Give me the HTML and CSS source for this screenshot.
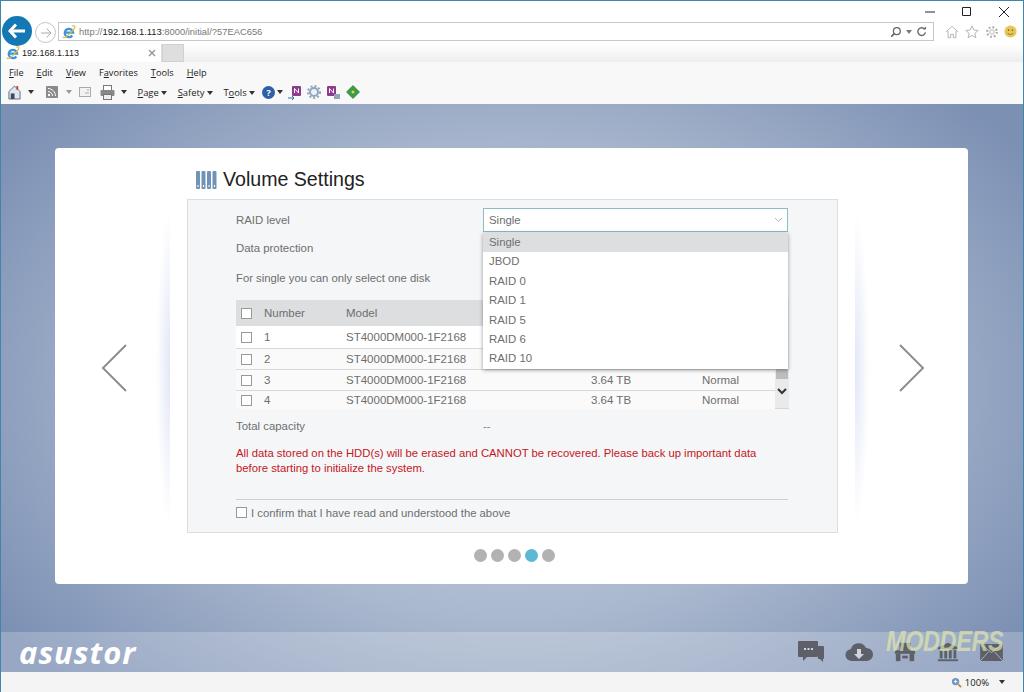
FILE: index.html
```html
<!DOCTYPE html>
<html lang="en">
<head>
    <meta charset="UTF-8">
    <title>Volume Settings</title>
    <link rel="stylesheet" href="styles.css">
</head>
<body>

<div class="window">
    <div class="titlebar">
        <svg class="win-btn" width="12" height="12" viewBox="0 0 12 12"><path d="M1 6h10" stroke="#222" fill="none"/></svg>
        <svg class="win-btn" width="12" height="12" viewBox="0 0 12 12"><path d="M1.5 1.5h8v8h-8z" stroke="#222" fill="none"/></svg>
        <svg class="win-btn last" width="12" height="12" viewBox="0 0 12 12"><path d="M1 1l10 10M11 1L1 11" stroke="#222" fill="none"/></svg>
    </div>

    <div class="navbar">
        <div class="back-btn">
            <svg width="18" height="16" viewBox="0 0 18 16"><path d="M8 1.500L2 8l6 6.500M2 8h15" stroke="#fff" stroke-width="3" fill="none"/></svg>
        </div>
        <div class="forward-btn">
            <svg width="12" height="12" viewBox="0 0 12 12"><path d="M6.500 1.500L11 6l-4.500 4.500M11 6H1" stroke="#aaa" fill="none"/></svg>
        </div>
        <div class="address">
            <svg class="ie-icon" width="14" height="14" viewBox="0 0 16 16"><use href="#ie"/></svg>
            <span class="url"><span class="dim">http://</span>192.168.1.113<span class="dim">:8000/initial/?57EAC656</span></span>
            <svg class="addr-tool" width="12" height="12" viewBox="0 0 14 14"><circle cx="8" cy="6" r="4" stroke="#666" stroke-width="1.500" fill="none"/><path d="M5 9l-3.500 3.500" stroke="#666" stroke-width="2"/></svg>
            <span class="caret small"></span>
            <svg class="addr-tool" width="11" height="11" viewBox="0 0 12 12"><path d="M9.500 3.500A4.200 4.200 0 1 0 10.300 7" stroke="#666" stroke-width="1.500" fill="none"/><path d="M7.500 3.500h3.500v-3z" fill="#666"/></svg>
        </div>
        <div class="nav-icons">
            <svg width="14" height="14" viewBox="0 0 16 16"><path d="M1 8l7-6.500L15 8M3.500 7v7.500h3v-4h3v4h3V7" stroke="#aaa" fill="none"/></svg>
            <svg width="14" height="14" viewBox="0 0 16 16"><path d="M8 1l2.100 4.700 5 .5-3.800 3.300 1.100 5L8 11.900l-4.400 2.600 1.100-5L.9 6.200l5-.5z" stroke="#aaa" fill="none"/></svg>
            <svg width="14" height="14" viewBox="0 0 16 16"><circle cx="8" cy="8" r="2.500" stroke="#aaa" fill="none"/><circle cx="8" cy="8" r="5.500" stroke="#aaa" stroke-width="2.500" stroke-dasharray="2 2.300" fill="none"/></svg>
            <svg class="smile" width="13" height="13" viewBox="0 0 15 15"><circle cx="7.500" cy="7.500" r="7" fill="#e9c65a"/><circle cx="5.300" cy="5.800" r="1" fill="#8a6d1c"/><circle cx="9.700" cy="5.800" r="1" fill="#8a6d1c"/><path d="M4 9c1.500 2.500 5.500 2.500 7 0" stroke="#8a6d1c" fill="none"/></svg>
        </div>
    </div>

    <div class="tabstrip">
        <div class="tab">
            <svg width="14" height="14" viewBox="0 0 16 16"><use href="#ie"/></svg>
            <span class="tab-title">192.168.1.113</span>
            <svg class="tab-close" width="8" height="8" viewBox="0 0 8 8"><path d="M1 1l6 6M7 1L1 7" stroke="#999" stroke-width="1.500"/></svg>
        </div>
        <div class="new-tab"></div>
    </div>

    <div class="menubar">
        <span><u>F</u>ile</span>
        <span><u>E</u>dit</span>
        <span><u>V</u>iew</span>
        <span>F<u>a</u>vorites</span>
        <span><u>T</u>ools</span>
        <span><u>H</u>elp</span>
    </div>

    <div class="commandbar">
        <svg class="cmd-home" width="13" height="15" viewBox="0 0 14 16"><path d="M7 1L1 7v8h12V7z" fill="#dfe6ee" stroke="#5a6a80"/><rect x="3" y="9" width="4" height="6" fill="#3a4a60"/><rect x="9" y="1" width="2" height="4" fill="#b04a4a"/></svg>
        <span class="caret"></span>
        <svg class="cmd-feed" width="12" height="12" viewBox="0 0 12 12"><rect width="12" height="12" rx="1" fill="#8a8a8a"/><circle cx="3" cy="9" r="1.200" fill="#fff"/><path d="M2 5.500c2.500 0 4.500 2 4.500 4.500M2 2.500c4 0 7.500 3.500 7.500 7.500" stroke="#fff" fill="none"/></svg>
        <span class="caret light"></span>
        <svg class="cmd-mail" width="12" height="10" viewBox="0 0 12 10"><rect x=".5" y=".5" width="11" height="9" fill="#f2f2f2" stroke="#aaa"/><path d="M6 6h4M8 3h2" stroke="#aaa"/></svg>
        <svg class="cmd-print" width="15" height="15" viewBox="0 0 15 15"><rect x="3.500" y=".5" width="8" height="5" fill="#fff" stroke="#777"/><rect x=".5" y="5" width="14" height="6" rx="1" fill="#888"/><rect x="3.500" y="9.500" width="8" height="5" fill="#eee" stroke="#777"/></svg>
        <span class="caret"></span>
        <span class="cmd-item"><u>P</u>age <span class="caret"></span></span>
        <span class="cmd-item"><u>S</u>afety <span class="caret"></span></span>
        <span class="cmd-item">T<u>o</u>ols <span class="caret"></span></span>
        <span class="cmd-help">?</span>
        <span class="caret"></span>
        <svg class="cmd-ext first" width="15" height="15" viewBox="0 0 15 15"><rect x="5" y="1" width="9" height="10" rx="1" fill="#8e3a8e"/><path d="M7.500 8V3.500l4 4.500V3.500" stroke="#fff" fill="none"/><path d="M1 13h6M5 11l2 2-2 2" stroke="#3a6ab0" fill="none"/></svg>
        <svg class="cmd-ext" width="14" height="14" viewBox="0 0 14 14"><circle cx="7" cy="7" r="4" stroke="#8fa5bd" stroke-width="2" fill="#eef2f6"/><circle cx="7" cy="7" r="6" stroke="#8fa5bd" stroke-width="2" stroke-dasharray="2 2" fill="none"/></svg>
        <svg class="cmd-ext" width="15" height="15" viewBox="0 0 15 15"><rect x="1" y="1" width="9" height="10" rx="1" fill="#8e3a8e"/><path d="M3.500 8V3.500l4 4.500V3.500" stroke="#fff" fill="none"/><rect x="8" y="9" width="6" height="5" fill="#8fa5bd"/></svg>
        <svg class="cmd-ext" width="14" height="14" viewBox="0 0 14 14"><path d="M7 0l7 7-7 7-7-7z" fill="#3f9b4c"/><circle cx="7" cy="7" r="1.500" fill="#e8d24a"/></svg>
    </div>

    <div class="stage">
        <div class="stage-main">
            <svg class="arrow arrow-left" width="28" height="50" viewBox="0 0 28 50"><path d="M26 2L3 25l23 23" stroke="#8b8f95" stroke-width="2" fill="none"/></svg>
            <div class="card">
                <div class="card-head">
                    <svg width="22" height="18" viewBox="0 0 22 18"><g fill="#7094b8"><rect x="0" y="0" width="4" height="18" rx="1"/><rect x="5.500" y="0" width="4" height="18" rx="1"/><rect x="11" y="0" width="4" height="18" rx="1"/><rect x="16.500" y="0" width="4" height="18" rx="1"/></g><g fill="#fff"><rect x="1.500" y="14" width="1" height="2"/><rect x="7" y="14" width="1" height="2"/><rect x="12.500" y="14" width="1" height="2"/><rect x="18" y="14" width="1" height="2"/></g></svg>
                    <h1>Volume Settings</h1>
                </div>

                <div class="panel">
                    <div class="row row-raid">
                        <label>RAID level</label>
                        <div class="select">
                            <span>Single</span>
                            <svg width="9" height="6" viewBox="0 0 9 6"><path d="M1 1l3.500 3.500L8 1" stroke="#b5b5b5" fill="none"/></svg>
                            <ul class="dropdown">
                                <li class="current">Single</li>
                                <li>JBOD</li>
                                <li>RAID 0</li>
                                <li>RAID 1</li>
                                <li>RAID 5</li>
                                <li>RAID 6</li>
                                <li>RAID 10</li>
                            </ul>
                        </div>
                    </div>
                    <div class="row row-protect"><label>Data protection</label></div>
                    <div class="row row-hint"><label>For single you can only select one disk</label></div>

                    <div class="disks">
                        <div class="disk-table">
                            <div class="disk-row disk-head">
                                <span class="col-check"><i class="check"></i></span>
                                <span class="col-num">Number</span>
                                <span class="col-model">Model</span>
                                <span class="col-size"></span>
                                <span class="col-status"></span>
                            </div>
                            <div class="disk-row">
                                <span class="col-check"><i class="check"></i></span>
                                <span class="col-num">1</span>
                                <span class="col-model">ST4000DM000-1F2168</span>
                                <span class="col-size">3.64 TB</span>
                                <span class="col-status">Normal</span>
                            </div>
                            <div class="disk-row">
                                <span class="col-check"><i class="check"></i></span>
                                <span class="col-num">2</span>
                                <span class="col-model">ST4000DM000-1F2168</span>
                                <span class="col-size">3.64 TB</span>
                                <span class="col-status">Normal</span>
                            </div>
                            <div class="disk-row">
                                <span class="col-check"><i class="check"></i></span>
                                <span class="col-num">3</span>
                                <span class="col-model">ST4000DM000-1F2168</span>
                                <span class="col-size">3.64 TB</span>
                                <span class="col-status">Normal</span>
                            </div>
                            <div class="disk-row">
                                <span class="col-check"><i class="check"></i></span>
                                <span class="col-num">4</span>
                                <span class="col-model">ST4000DM000-1F2168</span>
                                <span class="col-size">3.64 TB</span>
                                <span class="col-status">Normal</span>
                            </div>
                        </div>
                        <div class="scrollbar">
                            <div class="scroll-thumb"></div>
                            <svg width="10" height="7" viewBox="0 0 10 7"><path d="M1 1l4 4 4-4" stroke="#333" stroke-width="2" fill="none"/></svg>
                        </div>
                    </div>

                    <div class="row row-total"><label>Total capacity</label><span class="total-value">--</span></div>

                    <p class="warning">All data stored on the HDD(s) will be erased and CANNOT be recovered. Please back up important data before starting to initialize the system.</p>

                    <div class="confirm">
                        <i class="check"></i>
                        <span>I confirm that I have read and understood the above</span>
                    </div>
                </div>

                <div class="dots">
                    <i></i><i></i><i></i><i class="active"></i><i></i>
                </div>
            </div>
            <svg class="arrow arrow-right" width="28" height="50" viewBox="0 0 28 50"><path d="M2 2l23 23L2 48" stroke="#8b8f95" stroke-width="2" fill="none"/></svg>
        </div>

        <div class="footer">
            <span class="logo">asustor</span>
            <div class="footer-icons">
                <svg width="26" height="22" viewBox="0 0 26 22"><path d="M22 5h3a1 1 0 0 1 1 1v11a1 1 0 0 1-1 1v3l-3-3h-2V5z" fill="#5d6068"/><path d="M1 0h18a1 1 0 0 1 1 1v14a1 1 0 0 1-1 1H9l-4 4v-4H1a1 1 0 0 1-1-1V1a1 1 0 0 1 1-1z" fill="#5d6068"/><g fill="#cfd5df"><rect x="6" y="7" width="2" height="2"/><rect x="9.500" y="7" width="2" height="2"/><rect x="13" y="7" width="2" height="2"/></g></svg>
                <svg width="28" height="20" viewBox="0 0 28 20"><path d="M7 19a6 6 0 0 1-1-12 8 8 0 0 1 15-1 6.500 6.500 0 0 1 1 13z" fill="#5d6068"/><path d="M12 7h4v5h3l-5 5-5-5h3z" fill="#cfd5df"/></svg>
                <svg width="22" height="20" viewBox="0 0 24 20"><rect x="6" y="0" width="12" height="8" fill="#5d6068"/><rect x="1" y="8" width="22" height="4" fill="#5d6068"/><rect x="2" y="12" width="5" height="8" fill="#5d6068"/><rect x="17" y="12" width="5" height="8" fill="#5d6068"/><rect x="9" y="14" width="6" height="3" fill="#5d6068"/></svg>
                <svg width="22" height="20" viewBox="0 0 24 20"><path d="M12 0l11 5v2H1V5z" fill="#5d6068"/><g fill="#5d6068"><rect x="3" y="8" width="3" height="9"/><rect x="8" y="8" width="3" height="9"/><rect x="13" y="8" width="3" height="9"/><rect x="18" y="8" width="3" height="9"/><rect x="1" y="18" width="22" height="2"/></g></svg>
                <svg width="23" height="17" viewBox="0 0 24 18"><rect width="24" height="18" fill="#5d6068"/><path d="M0 0l12 9L24 0M0 18l9-10M24 18L15 8" stroke="#aeb5c2" fill="none"/></svg>
            </div>
            <div class="watermark">MODDERS</div>
        </div>
    </div>

    <div class="statusbar">
        <svg width="11" height="11" viewBox="0 0 12 12"><circle cx="5" cy="5" r="4" fill="#6d93c4"/><path d="M3 5h4M5 3v4" stroke="#fff"/><path d="M8 8l3 3" stroke="#c08a3e" stroke-width="2"/></svg>
        <span class="zoom">100%</span>
        <span class="caret"></span>
    </div>
</div>

<svg class="defs" width="0" height="0">
    <symbol id="ie" viewBox="0 0 16 16">
        <path d="M3.500 8.800h9.200A4.800 4.800 0 1 0 11.800 12" stroke="#3d95d6" stroke-width="2.600" fill="none"/>
        <path d="M.8 13.500c1 2.500 5-.5 9-4.500s6-7 4.500-8c-1-.5-3 .5-3 .5" stroke="#e7b93f" stroke-width="1.300" fill="none"/>
    </symbol>
</svg>

</body>
</html>
```

FILE: styles.css
```css
* {
    box-sizing: border-box;
}
html, body {
    margin: 0;
    height: 100%;
}
body {
    font-family: "Liberation Sans", Arial, sans-serif;
    overflow: hidden;
}
.defs {
    position: absolute;
}
.window {
    width: 1024px;
    height: 692px;
    display: flex;
    flex-direction: column;
    border: 1px solid #3f86a8;
    border-bottom: 0;
    background-color: #fff;
    font-family: "Open Sans", "Noto Sans", sans-serif;
    color: #222;
}

/* browser chrome */
.titlebar {
    height: 21px;
    display: flex;
    justify-content: flex-end;
    align-items: center;
    padding-right: 13px;
}
.win-btn {
    margin-left: 25px;
}
.navbar {
    height: 22px;
    display: flex;
    align-items: flex-start;
    position: relative;
    padding-left: 57px;
}
.back-btn {
    position: absolute;
    left: 1px;
    top: -6px;
    width: 30px;
    height: 30px;
    border-radius: 50%;
    background-color: #1478b4;
    display: flex;
    align-items: center;
    justify-content: center;
}
.forward-btn {
    position: absolute;
    left: 34px;
    top: 0;
    width: 21px;
    height: 21px;
    border-radius: 50%;
    border: 1px solid #c4c4c4;
    display: flex;
    align-items: center;
    justify-content: center;
}
.address {
    width: 876px;
    height: 19px;
    border: 1px solid #c4c8cc;
    display: flex;
    align-items: center;
    padding: 0 3px 0 3px;
}
.ie-icon {
    margin-right: 3px;
}
.url {
    flex: 1;
    font-family: "Liberation Sans", sans-serif;
    font-size: 9.4px;
    color: #222;
}
.dim {
    color: #777;
}
.addr-tool {
    margin: 0 3px;
}
.caret {
    display: inline-block;
    width: 0;
    height: 0;
    border-left: 3.5px solid transparent;
    border-right: 3.5px solid transparent;
    border-top: 4px solid #333;
    vertical-align: middle;
}
.caret.small {
    margin: 0 1px;
    border-top-color: #777;
}
.caret.light {
    border-top-color: #999;
}
.nav-icons {
    display: flex;
    align-items: center;
    gap: 6px;
    height: 19px;
    margin-left: 11px;
}
.smile {
    margin-left: -1px;
}
.tabstrip {
    height: 18px;
    display: flex;
    background: linear-gradient(#fff, #ededed);
}
.tab {
    width: 161px;
    height: 18px;
    background-color: #fff;
    display: flex;
    align-items: center;
    padding-left: 5px;
    border-right: 1px solid #ddd;
}
.tab-title {
    flex: 1;
    margin-left: 2px;
    font-family: "Liberation Sans", sans-serif;
    font-size: 9px;
}
.tab-close {
    margin-right: 5px;
}
.new-tab {
    width: 22px;
    height: 18px;
    background-color: #dedede;
    border: 1px solid #d0d0d0;
}
.menubar {
    height: 20px;
    background-color: #f8f8f8;
    display: flex;
    align-items: center;
    gap: 13px;
    padding-left: 8px;
    font-size: 9.2px;
}
.commandbar {
    height: 22px;
    background-color: #f8f8f8;
    display: flex;
    align-items: center;
    padding: 0 0 2px 7px;
    font-size: 9.4px;
}
.cmd-home {
    margin-right: 7px;
}
.cmd-feed {
    margin: 0 8.5px 0 11.5px;
}
.cmd-mail {
    margin: 0 9px 0 6.5px;
}
.cmd-print {
    margin-right: 6.5px;
}
.cmd-item {
    margin-left: 10.5px;
    white-space: nowrap;
}
.cmd-help {
    width: 13px;
    height: 13px;
    margin: 0 2px 0 7px;
    border-radius: 50%;
    background-color: #2f5fa8;
    color: #fff;
    font-size: 9px;
    font-weight: 700;
    text-align: center;
    line-height: 13px;
}
.cmd-ext {
    margin-left: 5px;
}
.cmd-ext.first {
    margin-left: 4px;
}

/* appliance page */
.stage {
    flex: 1;
    display: flex;
    flex-direction: column;
    background: radial-gradient(ellipse 620px 420px at 50% 50%, #ccd5e3 0%, #aab8ce 55%, #7c90b4 100%);
    font-family: "Liberation Sans", Arial, sans-serif;
}
.stage-main {
    flex: 1;
    position: relative;
    padding: 44px 0 0 54px;
}
.arrow {
    position: absolute;
    top: 239px;
    z-index: 2;
}
.arrow-left {
    left: 99px;
}
.arrow-right {
    left: 897px;
}
.card {
    width: 913px;
    height: 436px;
    position: relative;
    background-color: #fff;
    border-radius: 4px;
    display: flex;
    flex-direction: column;
    align-items: flex-start;
}
/* faint blue glow either side of the form */
.card::before, .card::after {
    content: "";
    position: absolute;
    top: 60px;
    width: 14px;
    height: 320px;
}
.card::before {
    left: 101px;
    background: radial-gradient(ellipse at right center, rgba(185, 198, 235, 0.42), transparent 70%);
}
.card::after {
    left: 800px;
    background: radial-gradient(ellipse at left center, rgba(185, 198, 235, 0.42), transparent 70%);
}
.card-head {
    height: 51px;
    margin-left: 132px;
    display: flex;
    align-items: center;
    padding: 12px 0 0 9px;
}
.card-head h1 {
    margin: 0 0 0 5px;
    font-size: 19.6px;
    font-weight: 400;
    color: #222;
}
.panel {
    width: 651px;
    height: 334px;
    margin-left: 132px;
    padding: 8px 49px 0 48px;
    background-color: #f5f6f8;
    border: 1px solid #dcdedf;
    font-size: 11.4px;
    color: #6e6e6e;
}
.row {
    display: flex;
    align-items: center;
}
.row label {
    width: 247px;
    flex: none;
}
.row-raid {
    height: 24px;
}
.row-protect {
    height: 24px;
    margin-top: 4px;
}
.row-hint {
    height: 20px;
    margin-top: 8px;
    font-size: 11.3px;
}
.row-hint label {
    width: auto;
}
.select {
    width: 306px;
    height: 24px;
    position: relative;
    display: flex;
    align-items: center;
    justify-content: space-between;
    padding: 0 4px 0 5px;
    background-color: #fff;
    border: 1px solid #8dbcc4;
}
.dropdown {
    position: absolute;
    left: -1px;
    top: 24px;
    width: 305px;
    margin: 0;
    padding: 0;
    list-style: none;
    background-color: #fff;
    box-shadow: 0 1px 4px rgba(0, 0, 0, 0.4);
    z-index: 5;
}
.dropdown li {
    height: 19.4px;
    line-height: 19.4px;
    padding-left: 6px;
}
.dropdown .current {
    background-color: #dcdee0;
}
.disks {
    display: flex;
    width: 553px;
    height: 109px;
    margin-top: 12px;
    border-bottom: 1px solid #d6d6d6;
    font-size: 11.5px;
}
.disk-table {
    flex: 1;
}
.disk-row {
    height: 21px;
    display: flex;
    align-items: center;
    background-color: #fafafa;
    border-top: 1px solid #d8d8d8;
}
.disk-head {
    height: 26px;
    background-color: #dcdedf;
    border-top: 0;
}
.disk-head + .disk-row {
    height: 22px;
    border-top: 0;
    background-color: #fff;
}
.disk-row:last-child {
    height: 19px;
}
.col-check {
    width: 28px;
    padding-left: 5px;
    display: flex;
}
.col-num {
    width: 82px;
}
.col-model {
    width: 245px;
}
.col-size {
    width: 111px;
}
.col-status {
    flex: 1;
}
.check {
    display: block;
    width: 11px;
    height: 11px;
    background-color: #fff;
    border: 1px solid #999;
}
.scrollbar {
    width: 14px;
    background-color: #eaeaea;
    display: flex;
    flex-direction: column;
    align-items: center;
    justify-content: flex-end;
    padding-bottom: 13px;
}
.scroll-thumb {
    width: 12px;
    height: 11px;
    margin-bottom: 9px;
    background-color: #bdbdbd;
}
.row-total {
    height: 16px;
    margin-top: 9px;
}
.total-value {
    color: #888;
}
.warning {
    margin: 12px 0 0;
    font-size: 11.3px;
    line-height: 14.5px;
    color: #c4161c;
}
.confirm {
    margin-top: 24px;
    height: 26px;
    border-top: 1px solid #cfcfcf;
    display: flex;
    align-items: center;
    gap: 4px;
    font-size: 11.3px;
}
.dots {
    display: flex;
    gap: 4px;
    margin: 16px 0 0 419px;
}
.dots i {
    width: 13px;
    height: 13px;
    border-radius: 50%;
    background-color: #b2b2b2;
}
.dots .active {
    background-color: #5eb8d3;
}
.footer {
    height: 40px;
    position: relative;
    display: flex;
    align-items: center;
    justify-content: space-between;
    padding: 0 20px 0 18px;
    background-color: rgba(255, 255, 255, 0.22);
}
.logo {
    font-family: "Open Sans", sans-serif;
    font-style: italic;
    font-weight: 700;
    font-size: 31px;
    letter-spacing: 1px;
    color: #fff;
}
.footer-icons {
    display: flex;
    align-items: center;
    gap: 21px;
}
.watermark {
    position: absolute;
    left: 885px;
    top: -7px;
    font-style: italic;
    font-weight: 700;
    font-size: 29px;
    letter-spacing: -0.5px;
    color: rgba(226, 232, 170, 0.7);
    transform: scaleX(0.81);
    transform-origin: left center;
}
.statusbar {
    height: 20px;
    display: flex;
    align-items: center;
    justify-content: flex-end;
    padding-right: 18px;
    background-color: #f4f4f4;
    font-size: 9.5px;
}
.zoom {
    margin: 0 10px 0 3px;
}
```
